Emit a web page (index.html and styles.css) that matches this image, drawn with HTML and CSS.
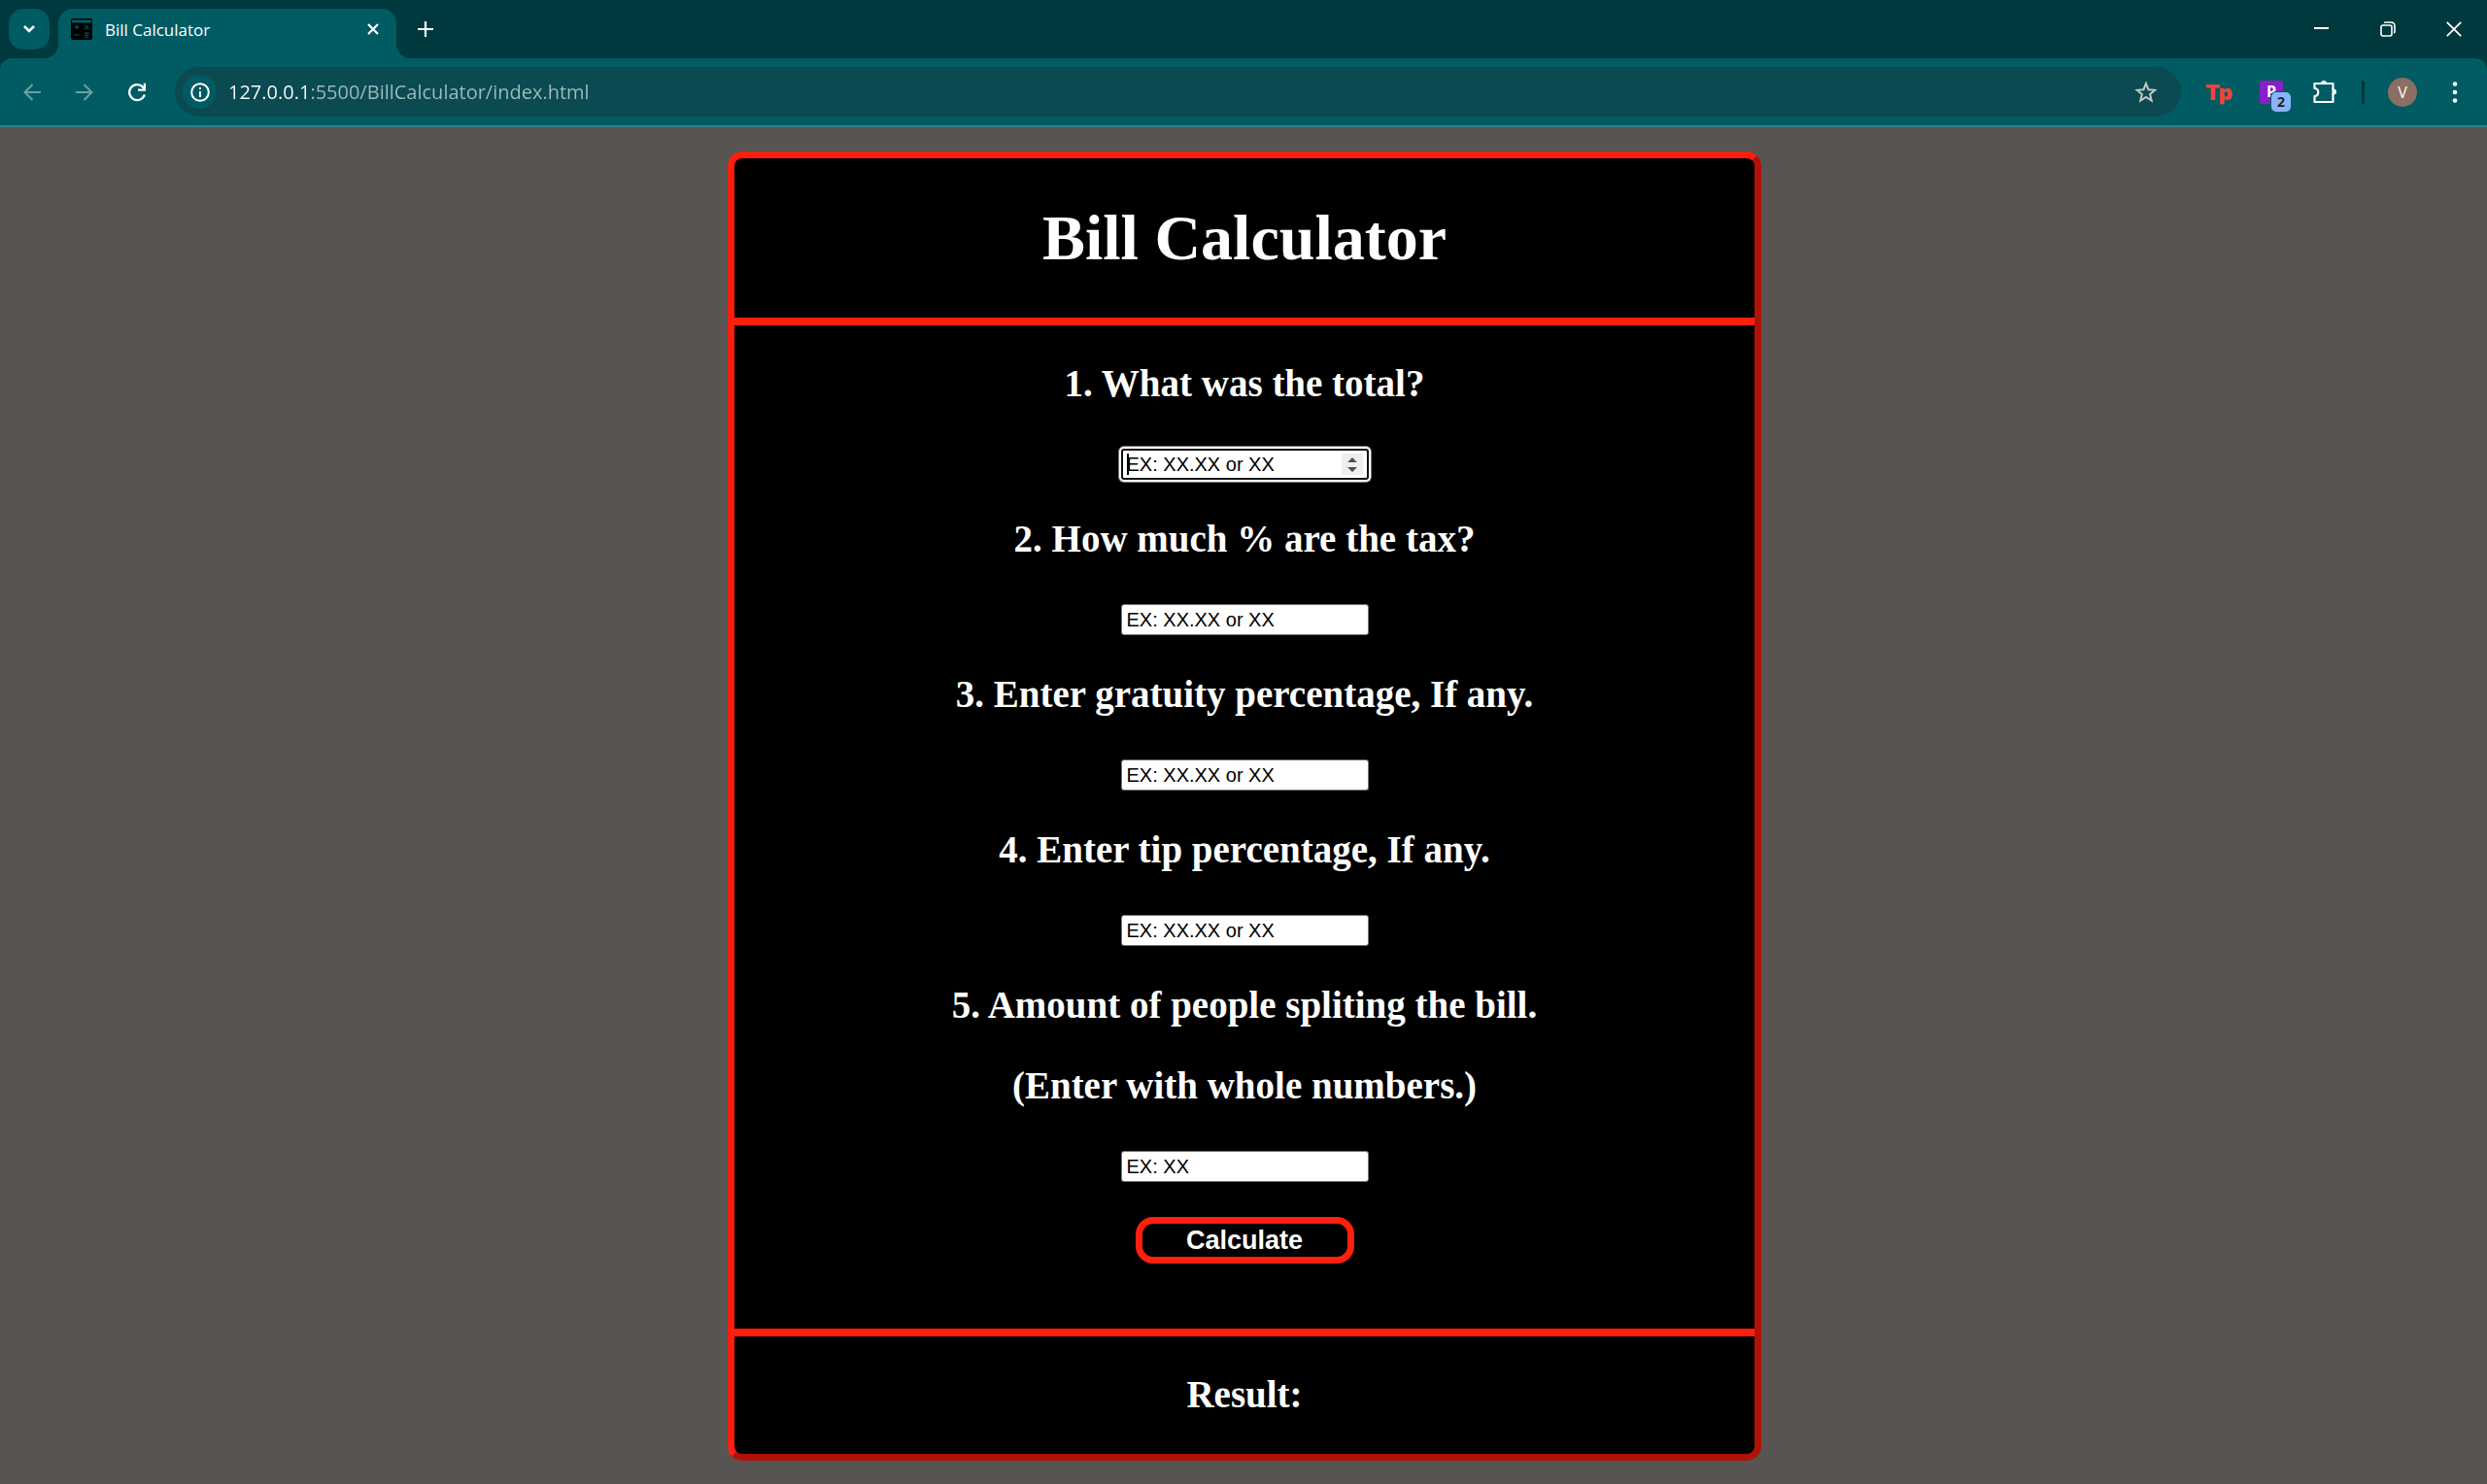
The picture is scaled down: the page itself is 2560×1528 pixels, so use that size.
FILE: index.html
```html
<!DOCTYPE html>
<html lang="en">
<head>
  <meta charset="utf-8">
  <title>Bill Calculator</title>
  <link rel="stylesheet" href="styles.css">
</head>
<body>
  <header class="browser">
    <div class="tab-strip">
      <button class="tab-search" type="button" aria-label="Search tabs">
        <svg width="14" height="10" viewBox="0 0 14 10"><path d="M2 2l5 5 5-5" fill="none" stroke="currentColor" stroke-width="2.6"/></svg>
      </button>
      <div class="tab">
        <svg class="favicon" width="24" height="24" viewBox="0 0 24 24">
          <rect x="1" y="1" width="22" height="22" rx="2" fill="#000"/>
          <path d="M2 2.500h20v3H2z" fill="#005b62"/>
          <path d="M4.500 10h5M7 7.500v5M15.200 8l4 4M19.200 8l-4 4M4.500 18h5M15 16h4.500M15 18.200h4.500M15 20.400h4.500" stroke="#00474c" stroke-width="1.400" fill="none"/>
        </svg>
        <span class="tab-title">Bill Calculator</span>
        <button class="tab-close" type="button" aria-label="Close tab">
          <svg width="12" height="12" viewBox="0 0 12 12"><path d="M1 1l10 10M11 1L1 11" fill="none" stroke="currentColor" stroke-width="2.200"/></svg>
        </button>
      </div>
      <button class="new-tab" type="button" aria-label="New tab">
        <svg width="16" height="16" viewBox="0 0 16 16"><path d="M8 0v16M0 8h16" fill="none" stroke="currentColor" stroke-width="2.200"/></svg>
      </button>
      <div class="window-controls">
        <button class="window-button" type="button" aria-label="Minimize">
          <svg width="16" height="16" viewBox="0 0 16 16"><path d="M0 6h15v2H0z" fill="currentColor"/></svg>
        </button>
        <button class="window-button" type="button" aria-label="Restore">
          <svg width="16" height="16" viewBox="0 0 16 16"><g fill="none" stroke="currentColor" stroke-width="1.600"><rect x="1" y="4" width="11" height="11" rx="2"/><path d="M4 1.500Q4.500 1 6 1h5q4 0 4 4v5q0 1.500-.8 2.200"/></g></svg>
        </button>
        <button class="window-button" type="button" aria-label="Close">
          <svg width="16" height="16" viewBox="0 0 16 16"><path d="M.8.8l14.400 14.400M15.200.8L.8 15.200" fill="none" stroke="currentColor" stroke-width="1.800"/></svg>
        </button>
      </div>
    </div>
    <div class="toolbar-backdrop">
      <div class="toolbar">
        <div class="nav-buttons">
          <button class="tool nav-off" type="button" aria-label="Back">
            <svg width="20" height="20" viewBox="0 0 20 20"><path d="M19 10H2.500M10.500 2l-8 8 8 8" fill="none" stroke="currentColor" stroke-width="2"/></svg>
          </button>
          <button class="tool nav-off" type="button" aria-label="Forward">
            <svg width="20" height="20" viewBox="0 0 20 20"><path d="M1 10h16.500M9.500 2l8 8-8 8" fill="none" stroke="currentColor" stroke-width="2"/></svg>
          </button>
          <button class="tool" type="button" aria-label="Reload">
            <svg width="20" height="20" viewBox="0 0 20 20"><path d="M17.800 12.500A8 8 0 1 1 16 4.600L18 7" fill="none" stroke="currentColor" stroke-width="2.300"/><path d="M19 .8v8h-8V6.500h5.700V.8z" fill="currentColor"/></svg>
          </button>
        </div>
        <div class="omnibox">
          <button class="site-info" type="button" aria-label="Site information">
            <svg width="20" height="20" viewBox="0 0 20 20"><circle cx="10" cy="10" r="8.800" fill="none" stroke="currentColor" stroke-width="2"/><path d="M9 9h2v6H9zM9 5h2v2H9z" fill="currentColor"/></svg>
          </button>
          <input class="address" type="text" aria-label="Address" value="127.0.0.1:5500/BillCalculator/index.html">
          <button class="bookmark" type="button" aria-label="Bookmark this page">
            <svg width="24" height="24" viewBox="0 0 24 24"><path d="M12 3l2.500 6.200 6.700.5-5.100 4.300 1.600 6.500L12 17l-5.700 3.500L7.900 14 2.800 9.700l6.700-.5z" fill="none" stroke="currentColor" stroke-width="2"/></svg>
          </button>
        </div>
        <div class="extensions">
          <button class="tool extension-tp" type="button">Tp</button>
          <button class="tool" type="button" aria-label="Extension, 2 notices">
            <span class="extension-p">P<span class="badge">2</span></span>
          </button>
          <button class="tool" type="button" aria-label="Extensions">
            <svg width="26" height="26" viewBox="0 0 26 26"><path d="M3.500 4h19v5.500M22.500 15.500V23h-19v-6M3.500 4v5" fill="none" stroke="currentColor" stroke-width="2.200" stroke-linejoin="round" stroke-linecap="round"/><path d="M3.500 9c5 .4 5 7.600 0 8M22.500 9v7" fill="none" stroke="currentColor" stroke-width="2.200"/><path d="M10 4a3 3 0 0 1 6 0zM23 9.500a3 3 0 0 1 0 6z" fill="currentColor"/></svg>
          </button>
        </div>
        <span class="separator"></span>
        <div class="nav-buttons">
          <button class="tool" type="button" aria-label="Profile"><span class="avatar">V</span></button>
          <button class="tool" type="button" aria-label="Menu">
            <svg width="6" height="24" viewBox="0 0 6 24"><g fill="currentColor"><circle cx="3" cy="3.500" r="2.300"/><circle cx="3" cy="12" r="2.300"/><circle cx="3" cy="20.500" r="2.300"/></g></svg>
          </button>
        </div>
      </div>
    </div>
  </header>

  <main class="page">
    <div class="card">
      <h1 class="card-title">Bill Calculator</h1>
      <form class="questions">
        <label class="question" for="total">1. What was the total?</label>
        <div class="answer"><input class="field field-active" id="total" type="number" placeholder="EX: XX.XX or XX"></div>
        <label class="question" for="tax">2. How much % are the tax?</label>
        <div class="answer"><input class="field" id="tax" type="number" placeholder="EX: XX.XX or XX"></div>
        <label class="question" for="gratuity">3. Enter gratuity percentage, If any.</label>
        <div class="answer"><input class="field" id="gratuity" type="number" placeholder="EX: XX.XX or XX"></div>
        <label class="question" for="tip">4. Enter tip percentage, If any.</label>
        <div class="answer"><input class="field" id="tip" type="number" placeholder="EX: XX.XX or XX"></div>
        <label class="question" for="people">5. Amount of people spliting the bill.</label>
        <label class="question" for="people">(Enter with whole numbers.)</label>
        <div class="answer answer-last"><input class="field" id="people" type="number" placeholder="EX: XX"></div>
        <button class="calculate" type="button">Calculate</button>
      </form>
      <h2 class="result">Result:</h2>
    </div>
  </main>
</body>
</html>
```
FILE: styles.css
```css
:root {
  --strip: #00393d;
  --toolbar: #005b62;
  --omnibox: #0a4a50;
  --red: #ff1f0f;
  --red-dark: #b01208;
}

* { box-sizing: border-box; }

body {
  margin: 0;
  min-height: 100vh;
  background: #585452;
  color: #fff;
  font-family: "Liberation Serif", "Times New Roman", serif;
}

button {
  display: flex;
  align-items: center;
  justify-content: center;
  padding: 0;
  border: 0;
  background: none;
  color: inherit;
  font: inherit;
}

/* Browser window */
.browser { font-family: "Open Sans", "Noto Sans", sans-serif; }

.tab-strip {
  display: flex;
  height: 60px;
  padding: 9px 0 0 9px;
  background: var(--strip);
}

.tab-search {
  width: 42px;
  height: 42px;
  margin-right: 9px;
  border-radius: 15px;
  background: var(--toolbar);
}

.tab {
  position: relative;
  display: flex;
  align-items: center;
  width: 348px;
  padding: 0 18px 9px 12px;
  border-radius: 15px 15px 0 0;
  background: var(--toolbar);
}

.tab::before,
.tab::after {
  content: "";
  position: absolute;
  bottom: 0;
  width: 15px;
  height: 15px;
}
.tab::before {
  right: 100%;
  background: radial-gradient(circle at 0 0, transparent 15px, var(--toolbar) 15px);
}
.tab::after {
  left: 100%;
  background: radial-gradient(circle at 100% 0, transparent 15px, var(--toolbar) 15px);
}

.tab-title {
  flex: 1;
  margin-left: 12px;
  padding-top: 2px;
  font-size: 17px;
  line-height: 24px;
}

.new-tab {
  width: 42px;
  height: 42px;
  margin-left: 9px;
}

.window-controls {
  display: flex;
  margin-left: auto;
}
.window-button {
  width: 68px;
  height: 42px;
}

.toolbar-backdrop { background: var(--strip); }

.toolbar {
  display: flex;
  align-items: center;
  height: 71px;
  padding: 0 12px;
  border-bottom: 2px solid #2d7f85;
  border-radius: 12px 12px 0 0;
  background: var(--toolbar);
}

.nav-buttons,
.extensions {
  display: flex;
  gap: 12px;
}

.tool {
  width: 42px;
  height: 42px;
}
.nav-off { color: #6ba0a5; }

.omnibox {
  display: flex;
  flex: 1;
  align-items: center;
  height: 51px;
  margin: 0 18px;
  padding: 0 24px 0 8px;
  border-radius: 26px;
  background: var(--omnibox);
}

.site-info {
  width: 35px;
  height: 35px;
  border-radius: 50%;
  background: var(--toolbar);
}

.address {
  flex: 1;
  margin-left: 12px;
  padding: 0;
  border: 0;
  background: linear-gradient(90deg, #fff 84px, #9fbcbe 84px);
  background-clip: text;
  color: transparent;
  font-family: inherit;
  font-size: 20px;
  line-height: 30px;
}

.bookmark { color: #c4c7c5; }

.extension-tp {
  color: #f4433c;
  font-family: Inter, sans-serif;
  font-size: 22px;
  font-weight: 900;
}

.extension-p {
  position: relative;
  width: 24px;
  height: 24px;
  border-radius: 2px;
  background: #8a1fc8;
  font-size: 16px;
  font-weight: 700;
  line-height: 22px;
}

.badge {
  position: absolute;
  top: 12px;
  left: 12px;
  width: 20px;
  height: 20px;
  border-radius: 5px;
  background: #8ab4f8;
  color: #202124;
  font-size: 14px;
  line-height: 20px;
  box-shadow: 0 0 0 1px var(--toolbar);
}

.separator {
  width: 3px;
  height: 24px;
  margin: 0 18px;
  border-radius: 2px;
  background: var(--strip);
}

.avatar {
  width: 30px;
  height: 30px;
  border-radius: 50%;
  background: #8d6e63;
  font-size: 16px;
  line-height: 30px;
}

/* Calculator */
.page { padding: 25px 24px 24px 26px; }

.card {
  max-width: 1064px;
  margin: 0 auto;
  border: 7px solid;
  border-color: var(--red) var(--red-dark) var(--red-dark) var(--red);
  border-radius: 15px;
  background: #000;
  text-align: center;
}

.card-title {
  margin: 0;
  padding: 44px 0;
  font-size: 66px;
  line-height: 76px;
}

.questions {
  display: flex;
  flex-direction: column;
  align-items: center;
  padding: 38px 0 67px;
  border-top: 8px solid var(--red);
  border-bottom: 8px solid var(--red);
}

.question,
.result {
  margin: 0 0 39px;
  font-size: 39px;
  font-weight: 700;
  line-height: 44px;
}

.answer {
  height: 38px;
  margin-bottom: 39px;
  padding-top: 6px;
}
.answer-last { margin-bottom: 36px; }

.field {
  display: block;
  width: 255px;
  height: 32px;
  padding: 0 4px 0 5px;
  border: 1px solid #767676;
  border-radius: 3px;
  background-color: #fff;
  color: #000;
  font-family: "Liberation Sans", Arial, sans-serif;
  font-size: 20px;
  line-height: 24px;
}
.field::placeholder {
  color: #000;
  opacity: 1;
}
.field::-webkit-inner-spin-button {
  width: 22px;
  height: 22px;
  appearance: none;
  opacity: 0;
  background: #efefef url("data:image/svg+xml,%3Csvg xmlns='http://www.w3.org/2000/svg' viewBox='0 0 22 22'%3E%3Cpath d='M6 9l5-5 5 5zM6 14l5 5 5-5z' fill='%23505050'/%3E%3C/svg%3E") center / 22px 22px;
}

.field-active {
  padding: 0 4px;
  border: 2px solid #101010;
  background-image: linear-gradient(#000, #000);
  background-position: 4px center;
  background-repeat: no-repeat;
  background-size: 2px 22px;
  box-shadow: 0 0 0 2px #fff, 0 0 0 3px #767676;
}
.field-active::-webkit-inner-spin-button { opacity: 1; }

.calculate {
  width: 225px;
  height: 48px;
  border: 7px solid var(--red);
  border-radius: 18px;
  background: #000;
  font-family: "Liberation Sans", Arial, sans-serif;
  font-size: 27px;
  font-weight: 700;
}

.result { margin: 38px 0 39px; }
```
